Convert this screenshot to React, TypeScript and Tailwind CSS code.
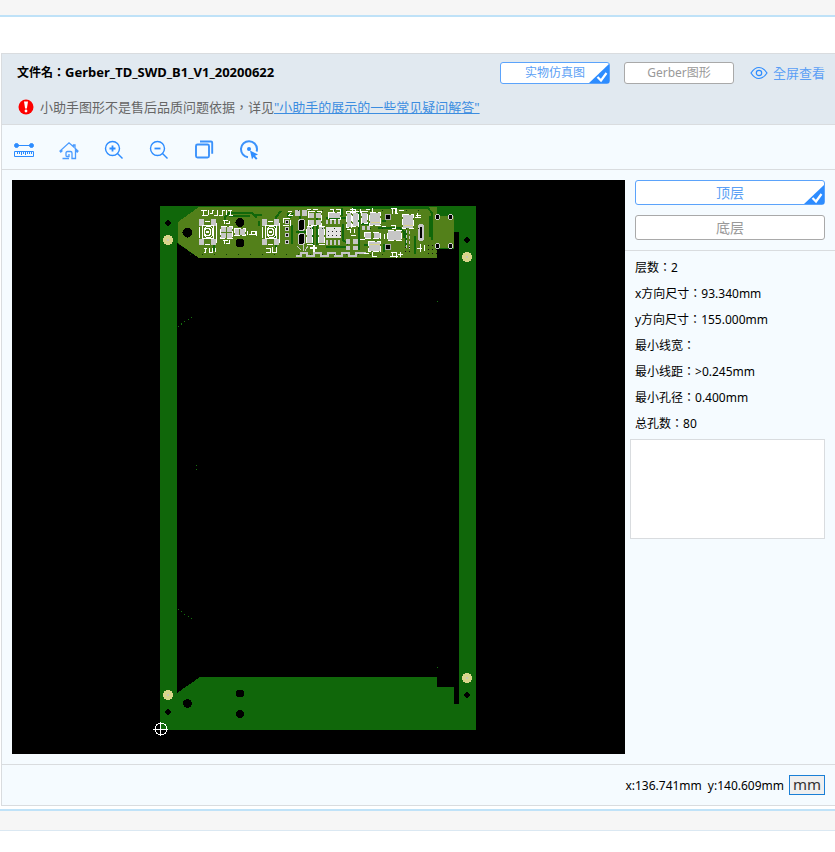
import { ReactNode, useState } from 'react';

type Box = [number, number, number, number];

const BOARD = '#10670a';
const MASK = '#53801a';
const PAD = '#c6c6c6';

const specs = [
  { label: '层数：', value: '2' },
  { label: 'x方向尺寸：', value: '93.340mm' },
  { label: 'y方向尺寸：', value: '155.000mm' },
  { label: '最小线宽：', value: '' },
  { label: '最小线距：', value: '>0.245mm' },
  { label: '最小孔径：', value: '0.400mm' },
  { label: '总孔数：', value: '80' },
];

const pads: Box[] = [
  [221, 227, 5, 5], [221, 233, 5, 5], [227, 227, 5, 5], [227, 233, 5, 5],
  [235, 229, 4, 6], [240, 229, 5, 6],
  [295, 210, 5, 6], [302, 210, 5, 6],
  [309, 213, 5, 5], [316, 213, 5, 5], [309, 220, 5, 5], [316, 220, 5, 5],
  [307, 227, 5, 16], [319, 227, 5, 16], [329, 213, 11, 5],
  [347, 213, 4, 14], [353, 213, 5, 13], [362, 213, 5, 10],
  [370, 213, 10, 12], [403, 215, 10, 13], [388, 231, 13, 9],
  [365, 233, 6, 5], [374, 233, 6, 5], [369, 242, 11, 9],
  [346, 239, 4, 5], [353, 239, 5, 5], [346, 246, 4, 4], [353, 246, 5, 4],
  [326, 220, 2, 4], [330, 220, 2, 4], [334, 220, 2, 4], [338, 220, 2, 4],
  [326, 240, 2, 5], [330, 240, 2, 5], [334, 240, 2, 5], [338, 240, 2, 5],
  [362, 226, 3, 4], [367, 226, 3, 4],
];

const outlines: Box[] = [
  [220, 226, 13, 13], [234, 228, 12, 8], [308, 211, 14, 15],
  [306, 226, 7, 19], [318, 226, 7, 19], [328, 212, 13, 8],
  [346, 211, 6, 17], [352, 211, 7, 16], [369, 212, 12, 14],
  [402, 214, 12, 15], [387, 230, 15, 11], [364, 232, 17, 7],
  [368, 241, 13, 11], [283, 218, 8, 8], [361, 211, 7, 13],
];

// silkscreen designators, small enough to read as strokes
const silk =
  'M201 210.500h6M203.500 210v5M202 215.500h6M208.500 210v5M210 213.500h2v-3h2M214 215.500h4M217.500 210v5M219 215.500h3v-5h3M226.500 215v-5M228 210.500h4M230.500 210v6M229 215.500h4' +
  'M223 220.500h5M224.500 220v4M226 223.500h3v-3M223 240.500h5M224.500 240v4M226 243.500h3v-4M204 248.500h3M205.500 248v4h-2M209.500 248v4h3v-4M215.500 248v4' +
  'M247.500 231v4M249 234.500h2v-4M252 231.500h3v3h-3M256 230.500v5M266 248.500h4v4h-4M272.500 247v5h4v-5' +
  'M288 211.500h4M291 213l-3 3M289 215.500h4M307 209.500h4M313 209.500h5M330 209.500h3v3M336 209.500h4v3M350 209.500h5v3h-5' +
  'M391 208.500h4v5M392.500 208v6M396.500 208v6M395 213.500h3M399 210.500h5M391 252.500h5v5M392.500 252v5M390 256.500h8M400.500 252v5M398 254.500h5' +
  'M416 215.500h5M417.500 213v5M415 217.500h6M391 225.500h4v3h-3M347 229.500h3v3M354.500 229v4M351 235.500h5M417 248.500h5M420.500 244v8M424.500 245v6' +
  'M360.500 209v4M366 209.500h4M372.500 208v4h3M382 226.500h4M384.500 234v5M360 239.500h5M364 253.500h5M372.500 252v4h4M352.500 208v4';

const sideHoles: [number, number][] = [
  [168, 223], [467, 240], [168, 712], [467, 695],
];
const fiducials: [number, number][] = [
  [168, 240], [467, 257], [168, 695], [467, 678],
];
const tabHoles: [number, number][] = [
  [437, 217], [450, 217], [437, 246], [450, 246],
];

function TactSwitch({ x, y }: { x: number; y: number }) {
  return (
    <g transform={`translate(${x} ${y})`}>
      <g fill={PAD}>
        <rect width="5" height="7" />
        <rect x="12" width="5" height="7" />
        <rect y="20" width="5" height="6" />
        <rect x="12" y="20" width="5" height="6" />
      </g>
      <g fill="none" stroke="#fff">
        <path d="M6 2.500h5M6 25.500h5M17.500 4v20M.5 8v11M3.500 6.500h11v13h-11z" />
        <path d="M5.500 9.500l2-2h4l2 2v7l-2 2h-4l-2-2z" />
        <circle cx="8.500" cy="13" r="3.500" />
        <circle cx="8.500" cy="13" r="1" />
      </g>
    </g>
  );
}

function BoardDrawing() {
  return (
    <svg viewBox="12 180 613 574" className="block h-[574px] w-full" shapeRendering="crispEdges" role="img" aria-label="PCB">
      <rect x="160" y="206" width="316" height="524" fill={BOARD} />
      <path
        d="M177 243L199 258H437V249H454V232H459V704H454V687H437V677H200L177 693Z"
        fill="#000"
      />
      <path d="M178 222L199 207H437V216H454V248H437V258H199L178 243Z" fill={MASK} />

      <g fill="none" stroke={BOARD} strokeWidth="2">
        <path d="M225 222V217L229 213H252L257 218M229 216H250M214 240V251M281 211L276 217V248M288 213V217M292 225V244" />
        <path d="M300 216V220M296 232H306M313 226V245M317 212V245M342 208V216M326 218H346M343 224V240L348 244M326 247H346" />
        <path d="M352 208H428L432 213V240M430 216V237M382 221H386M378 228H400L404 232V238M406 230V246M359 212V250M384 244V252M415 236V254" />
        <path d="M255 215H262M259 221V226M293 213L290 218M361 224H373M364 245H370" />
      </g>

      <g fill={PAD}>
        {pads.map(([x, y, w, h], i) => (
          <rect key={i} x={x} y={y} width={w} height={h} />
        ))}
      </g>
      <g fill="none" stroke="#fff" strokeDasharray="6 2">
        {outlines.map(([x, y, w, h], i) => (
          <rect key={i} x={x + 0.5} y={y + 0.5} width={w - 1} height={h - 1} />
        ))}
      </g>

      <TactSwitch x={199} y={219} />
      <TactSwitch x={262} y={219} />

      <rect x="326" y="227" width="15" height="11" fill="#e4e4e4" />
      <path d="M328 231.500h13M328 235.500h13" stroke="#222" strokeDasharray="1 3" />
      <path d="M371 222.500h9M404 225.500h9M370 244.500h10" stroke="#d8d48a" />

      {[222, 229, 235, 242].map((y) => (
        <g key={y}>
          <circle cx="287" cy={y} r="2.500" fill={PAD} />
          <rect x="286" y={y - 1} width="2" height="2" fill="#111" />
        </g>
      ))}
      {[219, 233].map((y) => (
        <g key={y}>
          <rect x="298" y={y} width="7" height="12" rx="3" fill={PAD} />
          <rect x="299" y={y + 1} width="5" height="10" rx="2" fill="#000" />
        </g>
      ))}
      <rect x="418" y="224" width="6" height="17" rx="3" fill={PAD} />
      <rect x="420" y="227" width="2" height="11" fill="#000" />

      {/* stitching row along the lower edge */}
      <path d="M296 256h5v-3h6v3h7v-3h7v3h7v-3h7v3h7v-3h7v3h7v-3h10" fill="none" stroke={PAD} strokeWidth="2" />
      <path d="M297 246l4 4M303 245v6M308 246l-3 5" stroke={PAD} />
      <path d="M314 245v7M310 248h7" stroke="#fff" strokeWidth="2" />
      <path d="M406.500 230v20M409.500 231v20" stroke={PAD} strokeDasharray="3 2" />
      <path d="M405 247.500h8M405 251.500h8M428 245.500h10M428 249.500h10M428 253.500h10" stroke="#111" strokeDasharray="1 3" />
      <path d="M298 210.500h130M310 228.500h120M190 254.500h200" stroke="#123b08" strokeDasharray="1 11" />
      <path d={silk} fill="none" stroke="#fff" />

      {[217, 247].map((y) => (
        <circle key={y} cx="388" cy={y} r="3" fill="#000" stroke="#aaa" />
      ))}
      {tabHoles.map(([x, y]) => (
        <g key={`${x}-${y}`}>
          <circle cx={x + 0.5} cy={y} r="3" fill="#d0d0d0" />
          <circle cx={x + 0.5} cy={y} r="2" fill="#000" />
        </g>
      ))}

      <g fill="#000">
        <circle cx="187.500" cy="232.500" r="5" />
        <circle cx="240" cy="222.500" r="4.500" />
        <circle cx="240" cy="243" r="4.500" />
        <circle cx="187.500" cy="703.500" r="4.500" />
        <circle cx="240" cy="693.500" r="4" />
        <circle cx="240" cy="714" r="4" />
        {sideHoles.map(([x, y]) => (
          <path key={`${x}-${y}`} d={`M${x} ${y - 3}l3 3l-3 3l-3-3z`} stroke="#000" />
        ))}
      </g>
      {fiducials.map(([x, y]) => (
        <g key={`${x}-${y}`}>
          <circle cx={x} cy={y} r="5" fill="#d9d58b" />
          <rect x={x - 1} y={y - 1} width="2" height="2" fill="#c8c8b8" />
        </g>
      ))}

      <g stroke="#14700e" strokeDasharray="1 3">
        <path d="M178 326.500L197 313.500M178 609.500L197 622.500" />
      </g>
      <path d="M437 301.500h1M196 465.500h1M196 469.500h1M437 667.500h1" stroke="#14700e" />

      <g fill="none" stroke="#fff">
        <circle cx="161" cy="729" r="6" />
        <path d="M153 729.500h15M160.500 722v14" />
      </g>
    </svg>
  );
}

function RulerIcon() {
  return (
    <svg width="20" height="16" viewBox="0 0 20 16" fill="none" stroke="#2d8cff">
      <path d="M3 3.500h14" />
      <circle cx="2.500" cy="3.500" r="2" fill="#2d8cff" />
      <circle cx="17.500" cy="3.500" r="2" fill="#2d8cff" />
      <path d="M.5 9.500h19v5H.5zM3.500 10v2M5.500 10v2M7.500 10v3M9.500 10v2M11.500 10v3M13.500 10v2M15.500 10v2M17.500 10v2" />
    </svg>
  );
}

function HomeIcon() {
  return (
    <svg width="20" height="20" viewBox="0 0 20 20" fill="none" stroke="#4a9bff" strokeWidth="1.300">
      <path d="M3.500 10.500L1.800 12L1 11L10 2.800l4.500 4V5h1.500v3.200L19 11l-.8 1-1.700-1.500v8H13v-5.500q0-1.500-1.500-1.500h-3Q7 11.500 7 13v2.500q0 1 1 1h2v-2.500M10 18.500H3.500z" />
    </svg>
  );
}

function ZoomIcon({ plus }: { plus?: boolean }) {
  return (
    <svg width="20" height="20" viewBox="0 0 20 20" fill="none" stroke="#2d8cff" strokeWidth="1.400">
      <circle cx="8.500" cy="8.500" r="7" />
      <path d="M13.500 13.500l5 5" />
      <path d={plus ? 'M5.500 8.500h6M8.500 5.500v6' : 'M5.500 8.500h6'} strokeWidth="1.800" />
    </svg>
  );
}

function LayersIcon() {
  return (
    <svg width="20" height="20" viewBox="0 0 20 20" fill="none" stroke="#3b92fb" strokeWidth="1.900">
      <rect x="2" y="4.500" width="13" height="13" rx="1.500" />
      <path d="M6 1.500h11q1.200 0 1.200 1.200v11" />
    </svg>
  );
}

function PickIcon() {
  return (
    <svg width="20" height="20" viewBox="0 0 20 20" fill="none" stroke="#3b92fb" strokeWidth="2">
      <path d="M9 17.200A8 8 0 1 1 18 9q0 1.500-.5 2.500" />
      <circle cx="10" cy="9" r="2" fill="#2d8cff" stroke="none" />
      <path d="M11 10.500l8 4-3 1.200 2.500 2.800-1.500 1.200-2.500-2.800-1.500 2.600z" fill="#2d8cff" stroke="none" />
    </svg>
  );
}

function EyeIcon() {
  return (
    <svg width="18" height="14" viewBox="0 0 18 14" fill="none" stroke="#2d8cff" strokeWidth="1.200">
      <path d="M1 7q3.500-5.500 8-5.500T17 7q-3.500 5.500-8 5.500T1 7z" />
      <circle cx="9" cy="7" r="2.700" />
    </svg>
  );
}

function AlertIcon() {
  return (
    <svg width="16" height="16" viewBox="0 0 16 16">
      <circle cx="8" cy="8" r="7.500" fill="#fd0100" />
      <path d="M6 2.500h4L8.900 9.500H7.100z" fill="#fff" />
      <circle cx="8" cy="12" r="1.400" fill="#fff" />
    </svg>
  );
}

const tools = [
  { name: '测量', icon: <RulerIcon /> },
  { name: '复位', icon: <HomeIcon /> },
  { name: '放大', icon: <ZoomIcon plus /> },
  { name: '缩小', icon: <ZoomIcon /> },
  { name: '图层', icon: <LayersIcon /> },
  { name: '选择', icon: <PickIcon /> },
];

function ToggleButton({
  active,
  onClick,
  className,
  children,
}: {
  active: boolean;
  onClick: () => void;
  className: string;
  children: ReactNode;
}) {
  return (
    <button
      type="button"
      aria-pressed={active}
      onClick={onClick}
      className={`relative flex items-center justify-center rounded-[3px] border bg-white ${
        active ? 'border-[#5ba3fb] text-[#5b9ff5]' : 'border-[#a9a9a9] text-[#999]'
      } ${className}`}
    >
      {children}
      {active ? (
        <svg width="20" height="19" viewBox="0 0 20 19" className="absolute right-0 bottom-0">
          <path d="M20 0v19H0z" fill="#2d8cff" />
          <path d="M8.500 13l3.500 3.500L17.500 9" fill="none" stroke="#fff" strokeWidth="2.200" />
        </svg>
      ) : null}
    </button>
  );
}

export default function App() {
  const [view, setView] = useState<'real' | 'gerber'>('real');
  const [side, setSide] = useState<'top' | 'bottom'>('top');

  return (
    <div className="bg-white font-['Noto_Sans','Noto_Sans_CJK_TC',sans-serif] text-xs text-black">
      <div className="h-[17px] border-b-2 border-[#bfe2f8] bg-[#f6f6f6]" />

      <main className="mt-9 ml-px border-y border-l border-[#d9dcdf] bg-[#f5fbff]">
        <header className="h-[71px] border-b border-[#d9dcdf] bg-[#e1e9f0] pt-2 pl-4">
          <div className="flex items-center justify-between pr-[10px]">
            <h1 className="-ml-px font-bold">
              文件名：<span className="text-[13px]">Gerber_TD_SWD_B1_V1_20200622</span>
            </h1>
            <div className="flex items-center">
              <ToggleButton active={view === 'real'} onClick={() => setView('real')} className="h-[22px] w-[110px]">
                实物仿真图
              </ToggleButton>
              <ToggleButton active={view === 'gerber'} onClick={() => setView('gerber')} className="ml-[14px] h-[22px] w-[110px]">
                Gerber图形
              </ToggleButton>
              <a href="#fullscreen" className="ml-4 flex items-center gap-[5px] text-[13px] leading-5 text-[#5b9ff5]">
                <EyeIcon />
                全屏查看
              </a>
            </div>
          </div>
          <p className="mt-[13px] flex items-center text-[13px] leading-5 text-[#666]">
            <AlertIcon />
            <span className="ml-[6px]">
              小助手图形不是售后品质问题依据，详见
              <a href="#faq" className="text-[#3c8de0] underline">
                "小助手的展示的一些常见疑问解答"
              </a>
            </span>
          </p>
        </header>

        <div className="flex h-[45px] items-center border-b border-[#d9dcdf] pt-[6px]">
          {tools.map((tool) => (
            <button key={tool.name} type="button" aria-label={tool.name} className="flex h-8 w-[45px] items-center justify-center pr-[2px]">
              {tool.icon}
            </button>
          ))}
        </div>

        <div className="flex py-[10px] pl-[10px]">
          <div className="min-w-0 flex-1 bg-black">
            <BoardDrawing />
          </div>
          <aside className="w-[210px]">
            <div className="flex flex-col gap-[10px] border-b border-[#d9dcdf] px-[10px] pb-[10px]">
              <ToggleButton active={side === 'top'} onClick={() => setSide('top')} className="h-[25px] w-full text-sm">
                顶层
              </ToggleButton>
              <ToggleButton active={side === 'bottom'} onClick={() => setSide('bottom')} className="h-[25px] w-full text-sm">
                底层
              </ToggleButton>
            </div>
            <dl className="pt-1 pl-[10px]">
              {specs.map((item) => (
                <div key={item.label} className="flex h-[26px] items-center">
                  <dt>{item.label}</dt>
                  <dd>{item.value}</dd>
                </div>
              ))}
            </dl>
            <div className="mt-[2px] mr-[10px] ml-[5px] h-[100px] border border-[#d9dcdf] bg-white" />
          </aside>
        </div>

        <footer className="flex h-[41px] items-center justify-end border-t border-[#d9dcdf] pr-[10px]">
          <p className="flex gap-[6px] pt-[2px]">
            <span>x:136.741mm</span>
            <span>y:140.609mm</span>
          </p>
          <button type="button" className="ml-[5px] flex h-5 w-9 items-center justify-center border border-[#1a7fd6] bg-[#efefef] pb-[2px] text-[15px] text-[#333]">
            mm
          </button>
        </footer>
      </main>

      <div className="mt-[3px] h-[22px] border-t-2 border-b border-t-[#bfe2f8] border-b-[#dbe8f2] bg-[#f6f6f6]" />
    </div>
  );
}
